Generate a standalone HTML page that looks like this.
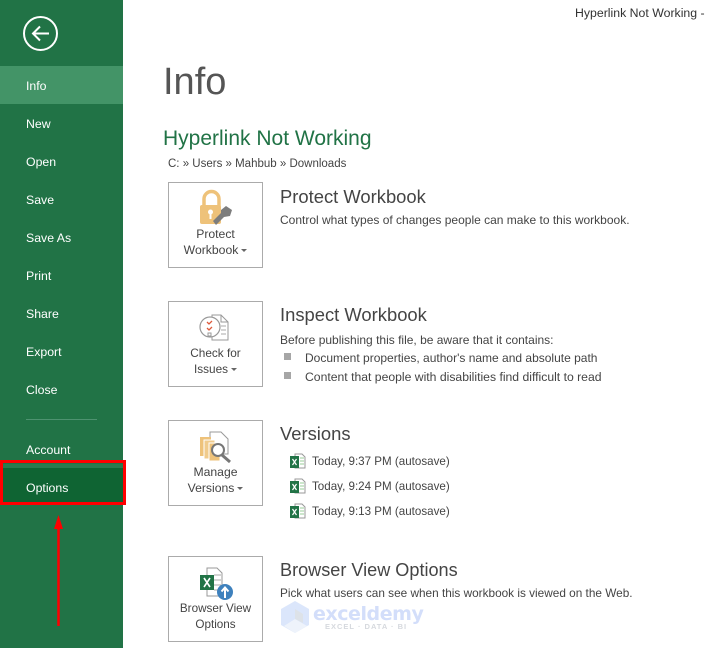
<!DOCTYPE html>
<html><head><meta charset="utf-8"><style>
html,body{margin:0;padding:0;background:#fff}
body{width:705px;height:648px;position:relative;overflow:hidden;font-family:"Liberation Sans",sans-serif;color:#444}
.t{position:absolute;white-space:nowrap;line-height:16px;font-size:12px}
.n{color:#fff;left:26px;font-size:12.3px}
.h{font-size:18.4px;line-height:24px;color:#444;left:280px}
.d{left:280px;font-size:12px;color:#444}
.b{position:absolute;left:168px;width:93px;height:84px;border:1px solid #ababab;background:#fff}
.l{left:168px;width:95px;text-align:center;font-size:12.2px;color:#444}
.c{display:inline-block;width:0;height:0;border:3px solid transparent;border-top:3px solid #666;border-bottom:0;margin-left:3px;vertical-align:2px}
svg{position:absolute;overflow:visible}
</style></head><body>
<div style="position:absolute;left:0;top:0;width:123px;height:648px;background:#217346"></div>
<div style="position:absolute;left:0;top:66px;width:123px;height:38px;background:#439467"></div>
<div style="position:absolute;left:0;top:468px;width:123px;height:34px;background:#0f6433"></div>
<div style="position:absolute;left:0;top:464px;width:123px;height:4px;background:#2a7a4f"></div>
<svg style="left:0;top:0" width="123" height="66"><circle cx="40.500" cy="33.500" r="16.500" fill="none" stroke="#fff" stroke-width="2"/><path d="M33 33.500H49M40 26.500L33 33.500L40 40.500" fill="none" stroke="#fff" stroke-width="2"/></svg>
<div class="t n" style="top:78px">Info</div>
<div class="t n" style="top:116px">New</div>
<div class="t n" style="top:154px">Open</div>
<div class="t n" style="top:192px">Save</div>
<div class="t n" style="top:230px">Save As</div>
<div class="t n" style="top:268px">Print</div>
<div class="t n" style="top:306px">Share</div>
<div class="t n" style="top:344px">Export</div>
<div class="t n" style="top:382px">Close</div>
<div style="position:absolute;left:26px;top:419px;width:71px;height:1px;background:#4e9270"></div>
<div class="t n" style="top:442px">Account</div>
<div class="t n" style="top:480px">Options</div>
<div style="position:absolute;left:0;top:460px;width:120px;height:39px;border:3px solid #f00"></div>
<svg style="left:0;top:510px" width="123" height="120"><path d="M58.500 5L63 19H54Z" fill="#f00"/><path d="M58.500 17V116" stroke="#f00" stroke-width="2.500"/></svg>

<div class="t" style="left:575px;top:5px;color:#333;font-size:12.3px">Hyperlink Not Working -</div>
<div class="t" style="left:163px;top:58px;font-size:38px;line-height:48px;color:#555">Info</div>
<div class="t" style="left:163px;top:126px;font-size:21px;line-height:26px;color:#217346">Hyperlink Not Working</div>
<div class="t" style="left:168px;top:156px;color:#444;font-size:11.500px">C: » Users » Mahbub » Downloads</div>

<div class="b" style="top:182px"></div>
<svg style="left:168px;top:182px" width="95" height="50"><path d="M36 24v-7a7.500 7.500 0 0 1 15 0v7" fill="none" stroke="#eec27a" stroke-width="3.500"/><rect x="32" y="23" width="21" height="19" rx="2" fill="#eec27a"/><circle cx="42.500" cy="30" r="2.500" fill="#fff"/><rect x="41.500" y="31" width="2" height="6" fill="#fff"/><path d="M45 39L53 31L53 28L58 24L64 28L62 34L56 35L48 43Z" fill="#7d7d7d"/></svg>
<div class="t l" style="top:226px">Protect</div>
<div class="t l" style="top:242px">Workbook<span class="c"></span></div>
<div class="t h" style="top:185px">Protect Workbook</div>
<div class="t d" style="top:212px">Control what types of changes people can make to this workbook.</div>

<div class="b" style="top:301px"></div>
<svg style="left:168px;top:301px" width="95" height="50"><path d="M44 14H53L60 21V39H44Z" fill="#fff" stroke="#999"/><path d="M53 14V21H60" fill="none" stroke="#999"/><path d="M53 25h5M53 29h5M53 33h5" stroke="#aaa"/><circle cx="42" cy="26" r="10" fill="#fff" stroke="#999" stroke-width="1.200"/><path d="M39 21l2 2 3-3M39 27l2 2 3-3" fill="none" stroke="#dd5a3c" stroke-width="1.300"/><rect x="40" y="32" width="3" height="3" fill="none" stroke="#999"/></svg>
<div class="t l" style="top:345px;font-size:11.800px">Check for</div>
<div class="t l" style="top:361px;font-size:11.800px">Issues<span class="c"></span></div>
<div class="t h" style="top:303px">Inspect Workbook</div>
<div class="t d" style="top:332px">Before publishing this file, be aware that it contains:</div>
<div style="position:absolute;left:284px;top:353px;width:7px;height:7px;background:#a6a6a6"></div>
<div class="t d" style="left:305px;top:350px">Document properties, author's name and absolute path</div>
<div style="position:absolute;left:284px;top:372px;width:7px;height:7px;background:#a6a6a6"></div>
<div class="t d" style="left:305px;top:369px;font-size:12.200px">Content that people with disabilities find difficult to read</div>

<div class="b" style="top:420px"></div>
<svg style="left:168px;top:420px" width="95" height="50"><path d="M42 12H53L60 19V34H42Z" fill="#fff" stroke="#999"/><rect x="32" y="17" width="11" height="19" fill="#eec27a"/><rect x="36" y="20" width="11" height="19" fill="#f0cb8c" stroke="#fff"/><rect x="41" y="23" width="11" height="18" fill="#eec27a" stroke="#fff"/><circle cx="50" cy="30" r="6" fill="#fff" stroke="#777" stroke-width="2"/><path d="M54 35L62 42" stroke="#777" stroke-width="3"/></svg>
<div class="t l" style="top:464px">Manage</div>
<div class="t l" style="top:480px">Versions<span class="c"></span></div>
<div class="t h" style="top:422px">Versions</div>

<svg style="left:290px;top:453px" width="16" height="70">
<g><path d="M5 1H12L15 4V15H5Z" fill="#fff" stroke="#999"/><path d="M10 5h4M10 8h4M10 11h4" stroke="#9c9"/><rect x="0" y="3" width="9" height="12" fill="#217346"/><path d="M2.500 6L6.500 12M6.500 6L2.500 12" stroke="#fff" stroke-width="1.200"/></g>
<g transform="translate(0,25)"><path d="M5 1H12L15 4V15H5Z" fill="#fff" stroke="#999"/><path d="M10 5h4M10 8h4M10 11h4" stroke="#9c9"/><rect x="0" y="3" width="9" height="12" fill="#217346"/><path d="M2.500 6L6.500 12M6.500 6L2.500 12" stroke="#fff" stroke-width="1.200"/></g>
<g transform="translate(0,50)"><path d="M5 1H12L15 4V15H5Z" fill="#fff" stroke="#999"/><path d="M10 5h4M10 8h4M10 11h4" stroke="#9c9"/><rect x="0" y="3" width="9" height="12" fill="#217346"/><path d="M2.500 6L6.500 12M6.500 6L2.500 12" stroke="#fff" stroke-width="1.200"/></g>
</svg>
<div class="t d" style="left:312px;top:454px;font-size:11.600px">Today, 9:37 PM (autosave)</div>
<div class="t d" style="left:312px;top:479px;font-size:11.600px">Today, 9:24 PM (autosave)</div>
<div class="t d" style="left:312px;top:504px;font-size:11.600px">Today, 9:13 PM (autosave)</div>

<div class="b" style="top:556px"></div>
<svg style="left:168px;top:556px" width="95" height="50"><path d="M39 12H49L54 17V40H39Z" fill="#fff" stroke="#999"/><path d="M46 19h7M46 24h7M46 29h7M46 34h7" stroke="#aaa"/><rect x="32" y="19" width="14" height="15" fill="#217346"/><path d="M36 22L42 31M42 22L36 31" stroke="#fff" stroke-width="1.600"/><circle cx="57" cy="36" r="8" fill="#3e81bd"/><path d="M57 42V32M53.500 35.500L57 31.500L60.500 35.500" fill="none" stroke="#fff" stroke-width="2"/></svg>
<div class="t l" style="top:601px;font-size:11.700px">Browser View</div>
<div class="t l" style="top:617px;font-size:11.700px">Options</div>
<div class="t h" style="top:558px;font-size:18.100px">Browser View Options</div>
<div class="t d" style="top:585px;font-size:11.800px">Pick what users can see when this workbook is viewed on the Web.</div>

<svg style="left:281px;top:601px" width="30" height="32"><path d="M14 0L28 8V24L14 32L0 24V8Z" fill="#dbe6fb"/><path d="M14 8L22 13V22L14 18Z" fill="#dde2e8"/><path d="M14 18L26 25L14 32L3 25Z" fill="#eef3fb"/></svg>
<div class="t" style="left:313px;top:601px;font-size:19px;line-height:26px;font-weight:bold;color:#d3defa;font-family:'DejaVu Sans',sans-serif;letter-spacing:-.45px">exceldemy</div>
<div class="t" style="left:325px;top:621px;font-size:7.500px;line-height:12px;font-weight:bold;color:#d6d9de;letter-spacing:1px">EXCEL · DATA · BI</div>
</body></html>
